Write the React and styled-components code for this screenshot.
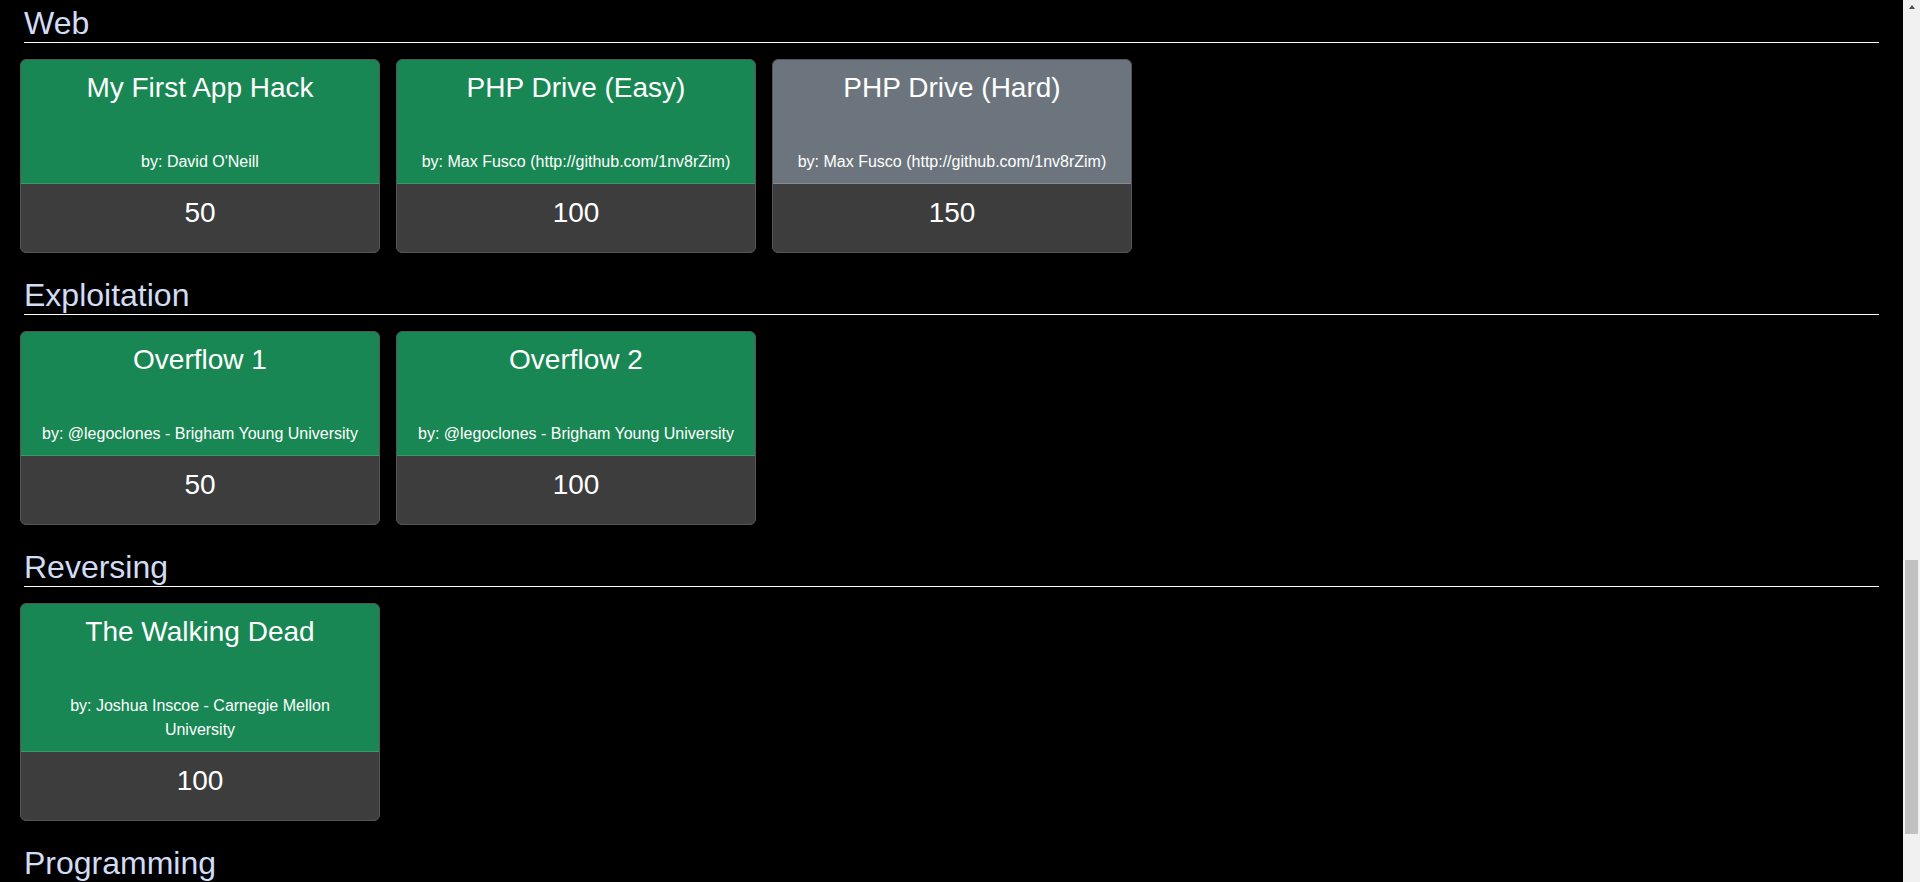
import React from 'react';
import styled, { createGlobalStyle } from 'styled-components';

const GlobalStyle = createGlobalStyle`
    body {
        margin: 0;
        background-color: #000;
        font-family: "Liberation Sans", Arial, sans-serif;
        color: #fff;
    }
`;

const Window = styled.div`
    display: flex;
    height: 100vh;
    overflow: hidden;
`;

const Page = styled.div`
    flex: 1;
    min-width: 0;
    padding: 4px 24px 0 24px;
`;

const ScrollTrack = styled.div`
    width: 17px;
    flex-shrink: 0;
    background-color: #f1f1f1;
    display: flex;
    flex-direction: column;
    align-items: center;
`;

const ArrowUp = styled.div`
    height: 17px;
    width: 17px;
    display: flex;
    justify-content: center;
    padding-top: 5px;
    box-sizing: border-box;

    &::before {
        content: '';
        width: 0;
        height: 0;
        border-left: 3.5px solid transparent;
        border-right: 3.5px solid transparent;
        border-bottom: 4px solid #505050;
    }
`;

const Thumb = styled.div`
    width: 13px;
    background-color: #c1c1c1;
`;

const Section = styled.section`
    margin-bottom: 23px;
`;

const Heading = styled.h3`
    margin: 0 0 16px 0;
    font-size: 32px;
    font-weight: 400;
    line-height: 38px;
    color: #d2ddf5;
    border-bottom: 1px solid #fff;
`;

const CardRow = styled.div`
    display: flex;
    flex-wrap: wrap;
    gap: 16px;
    margin-left: -4px;
`;

const Card = styled.div`
    width: 360px;
    box-sizing: border-box;
    border: 1px solid #555;
    border-radius: 6px;
    overflow: hidden;
    background-color: #3d3d3d;
    display: flex;
    flex-direction: column;
`;

const CardTop = styled.div`
    background-color: ${props => props.solved ? '#198754' : '#6c757d'};
    padding: 11px 16px 9px 16px;
    text-align: center;
`;

const Title = styled.div`
    font-size: 28px;
    line-height: 34px;
    margin-bottom: 45px;
`;

const Author = styled.div`
    font-size: 16px;
    line-height: 24px;
`;

const Points = styled.div`
    border-top: 1px solid ${props => props.solved ? '#3a9a6c' : '#858c93'};
    padding: 12px 0 22px 0;
    font-size: 28px;
    line-height: 34px;
    text-align: center;
`;

const sections = [
    {
        name: 'Web',
        challenges: [
            { title: 'My First App Hack', author: "David O'Neill", points: 50, solved: true },
            { title: 'PHP Drive (Easy)', author: 'Max Fusco (http://github.com/1nv8rZim)', points: 100, solved: true },
            { title: 'PHP Drive (Hard)', author: 'Max Fusco (http://github.com/1nv8rZim)', points: 150, solved: false },
        ],
    },
    {
        name: 'Exploitation',
        challenges: [
            { title: 'Overflow 1', author: '@legoclones - Brigham Young University', points: 50, solved: true },
            { title: 'Overflow 2', author: '@legoclones - Brigham Young University', points: 100, solved: true },
        ],
    },
    {
        name: 'Reversing',
        challenges: [
            { title: 'The Walking Dead', author: 'Joshua Inscoe - Carnegie Mellon University', points: 100, solved: true },
        ],
    },
    {
        name: 'Programming',
        challenges: [],
    },
];

// the page is scrolled near the bottom, so the thumb sits low in the track
const scroll = { top: 543, size: 274 };

function Challenge({ challenge }) {
    return (
        <Card>
            <CardTop solved={challenge.solved}>
                <Title>{challenge.title}</Title>
                <Author>by: {challenge.author}</Author>
            </CardTop>
            <Points solved={challenge.solved}>{challenge.points}</Points>
        </Card>
    );
}

export default function App() {
    return (
        <Window>
            <GlobalStyle />
            <Page>
                {sections.map(section => (
                    <Section key={section.name}>
                        <Heading>{section.name}</Heading>
                        <CardRow>
                            {section.challenges.map(c => (
                                <Challenge key={c.title} challenge={c} />
                            ))}
                        </CardRow>
                    </Section>
                ))}
            </Page>
            <ScrollTrack>
                <ArrowUp />
                <Thumb style={{ marginTop: scroll.top, height: scroll.size }} />
            </ScrollTrack>
        </Window>
    );
}
